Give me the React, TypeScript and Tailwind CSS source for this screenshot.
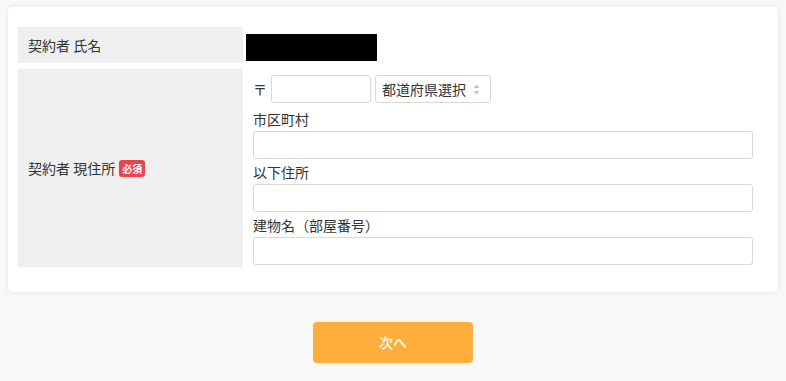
const font = "font-['Noto_Sans_CJK_JP','Noto_Sans',sans-serif]"

const TextInput = ({ className = "" }: { className?: string }) => (
  <input
    type="text"
    className={`h-[28px] rounded-[3px] border border-[#d9d9d9] bg-white px-2 text-[14px] outline-none ${className}`}
  />
)

const FieldLabel = ({ children, top }: { children: string; top: string }) => (
  <div className={`${top} pb-[2px] text-[14px] leading-[20px] text-[#333]`}>{children}</div>
)

export default function App() {
  return (
    <div className={`min-h-[381px] w-full bg-[#f8f8f8] pt-[7px] ${font}`}>
      {/* FORM CARD */}
      <div className="mx-[8px] rounded-[5px] bg-white px-[10px] pt-[20px] pb-[25px] shadow-[0_0_6px_rgba(0,0,0,0.08)]">
        <div className="flex flex-col gap-[6px]">
          {/* NAME */}
          <div className="flex">
            <div className="flex h-[36px] w-[225px] shrink-0 items-center bg-[#efefef] pl-[10px] text-[14px] text-[#333]">
              契約者 氏名
            </div>
            <div className="ml-[3px] pt-[7px]">
              <div className="h-[27px] w-[131px] bg-black" />
            </div>
          </div>

          {/* ADDRESS */}
          <div className="flex">
            <div className="flex w-[225px] shrink-0 items-center gap-[4px] bg-[#efefef] pl-[10px] text-[14px] text-[#333]">
              <span>契約者 現住所</span>
              <span className="rounded-[3px] bg-[#e9434b] px-[3px] text-[10px] leading-[17px] font-bold text-white">
                必須
              </span>
            </div>
            <div className="flex w-[500px] flex-col pt-[6px] pb-[2px] pl-[10px] box-content">
              <div className="flex items-center">
                <span className="w-[18px] text-[14px] text-[#333]">〒</span>
                <TextInput className="w-[100px]" />
                <div className="ml-[4px] flex h-[28px] w-[116px] items-center justify-between rounded-[3px] border border-[#d9d9d9] pr-[10px] pl-[6px] text-[14px] text-[#333]">
                  <span>都道府県選択</span>
                  <svg width="7" height="11" viewBox="0 0 7 11">
                    <path d="M3.5 0.5 L6.5 4 H0.5 Z" fill="#c4c4c4" />
                    <path d="M3.5 10.5 L6.5 7 H0.5 Z" fill="#c4c4c4" />
                  </svg>
                </div>
              </div>
              <FieldLabel top="pt-[6px]">市区町村</FieldLabel>
              <TextInput className="w-full" />
              <FieldLabel top="pt-[3px]">以下住所</FieldLabel>
              <TextInput className="w-full" />
              <FieldLabel top="pt-[3px]">建物名（部屋番号）</FieldLabel>
              <TextInput className="w-full" />
            </div>
          </div>
        </div>
      </div>

      {/* NEXT */}
      <div className="flex justify-center pt-[30px]">
        <button className="h-[41px] w-[160px] rounded-[4px] bg-[#ffad3b] text-[14px] font-medium text-white">
          次へ
        </button>
      </div>
    </div>
  )
}
